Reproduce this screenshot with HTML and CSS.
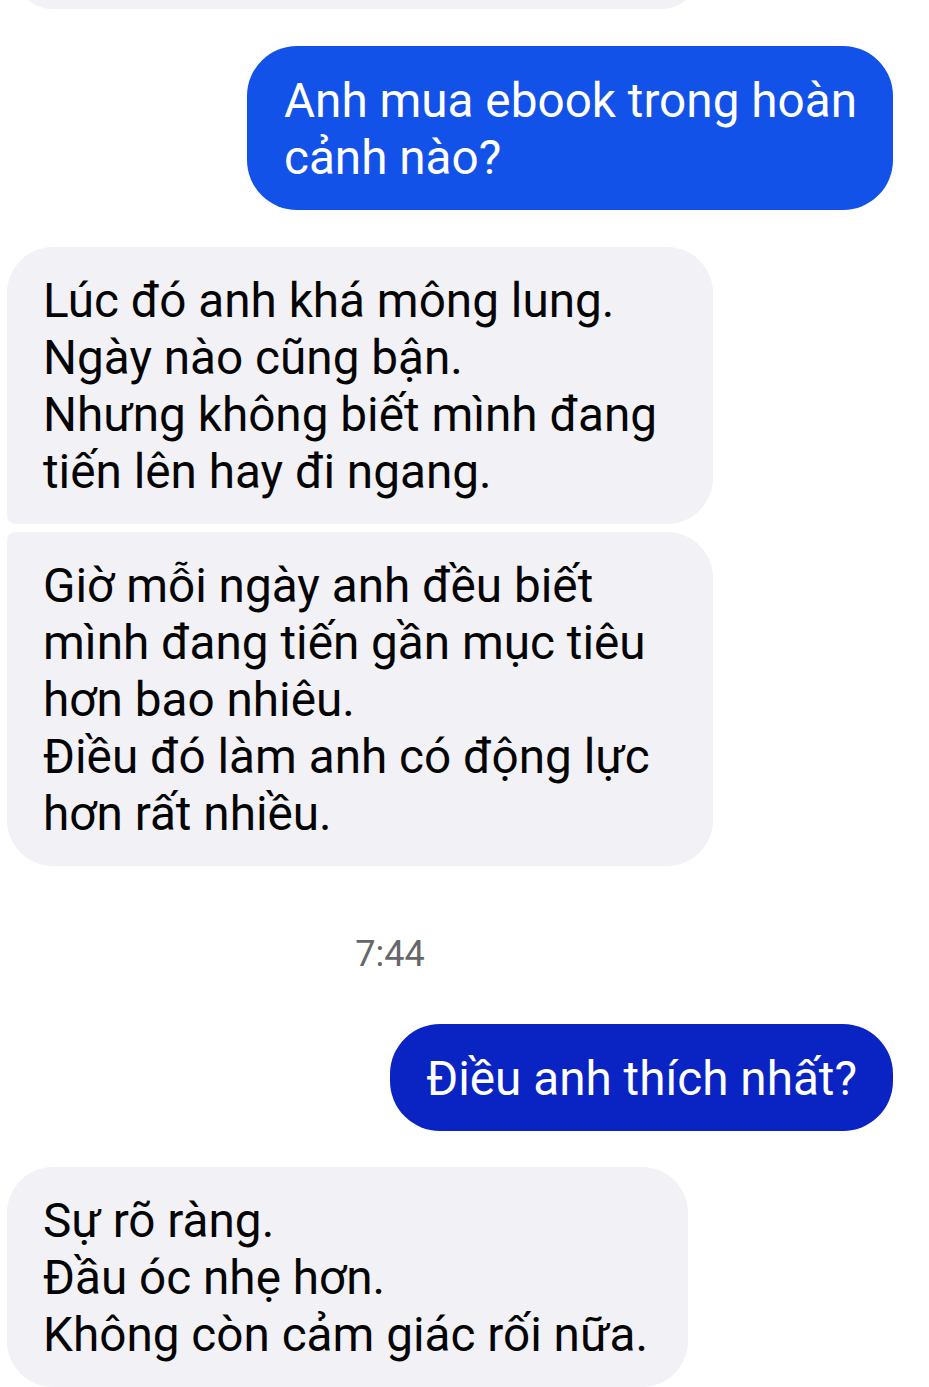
FILE: index.html
```html
<!DOCTYPE html>
<html lang="vi">
<head>
<meta charset="utf-8">
<title>Chat</title>
<link rel="stylesheet" href="styles.css">
</head>
<body>
<div class="chat">
  <div class="msg in prev"></div>

  <div class="row out gap-big">
    <div class="msg out blue1">Anh mua ebook trong hoàn<br>cảnh nào?</div>
  </div>

  <div class="group gap-big">
    <div class="msg in first">Lúc đó anh khá mông lung.<br>Ngày nào cũng bận.<br>Nhưng không biết mình đang<br>tiến lên hay đi ngang.</div>
    <div class="msg in last">Giờ mỗi ngày anh đều biết<br>mình đang tiến gần mục tiêu<br>hơn bao nhiêu.<br>Điều đó làm anh có động lực<br>hơn rất nhiều.</div>
  </div>

  <div class="time">7:44</div>

  <div class="row out">
    <div class="msg out blue2">Điều anh thích nhất?</div>
  </div>

  <div class="group gap-mid">
    <div class="msg in single">Sự rõ ràng.<br>Đầu óc nhẹ hơn.<br>Không còn cảm giác rối nữa.</div>
  </div>
</div>
</body>
</html>
```

FILE: styles.css
```css
html, body {
  margin: 0;
  padding: 0;
  background: #ffffff;
}
body {
  width: 929px;
  height: 1387px;
  overflow: hidden;
  font-family: Roboto, "Noto Sans", sans-serif;
}
.chat {
  display: flex;
  flex-direction: column;
}
.msg {
  font-size: 47.7px;
  line-height: 57px;
  padding: 25px 36px 25px 36px;
  box-sizing: border-box;
  width: fit-content;
  white-space: nowrap;
}
.msg.in {
  background: #f1f1f6;
  color: #050505;
  margin-left: 7px;
}
.msg.prev {
  height: 69px;
  margin-top: -60px;
  margin-left: 17px;
  width: 680px;
  border-radius: 46px;
  padding: 0;
}
.row.out {
  display: flex;
  justify-content: flex-end;
  padding-right: 36px;
}
.msg.out {
  color: #ffffff;
  border-radius: 50px;
}
.blue1 {
  background: #1352e8;
  padding: 27px 36px 23px 37px;
}
.blue2 {
  background: #0a24c4;
  padding: 27px 36px 23px 36px;
}
.gap-big {
  margin-top: 37px;
}
.gap-mid {
  margin-top: 36px;
}
.group {
  display: flex;
  flex-direction: column;
  gap: 8px;
}
.group .msg.first {
  width: 706px;
  border-radius: 46px 46px 46px 8px;
  padding: 26px 36px 23px 36px;
}
.group .msg.last {
  width: 706px;
  border-radius: 8px 46px 46px 46px;
  padding: 26px 36px 23px 36px;
}
.group .msg.single {
  width: 681px;
  border-radius: 46px;
  padding: 26px 36px 23px 36px;
}
.time {
  text-align: center;
  width: 780px;
  margin-top: 68px;
  margin-bottom: 50px;
  font-size: 36px;
  line-height: 40px;
  color: #65676b;
}
```
